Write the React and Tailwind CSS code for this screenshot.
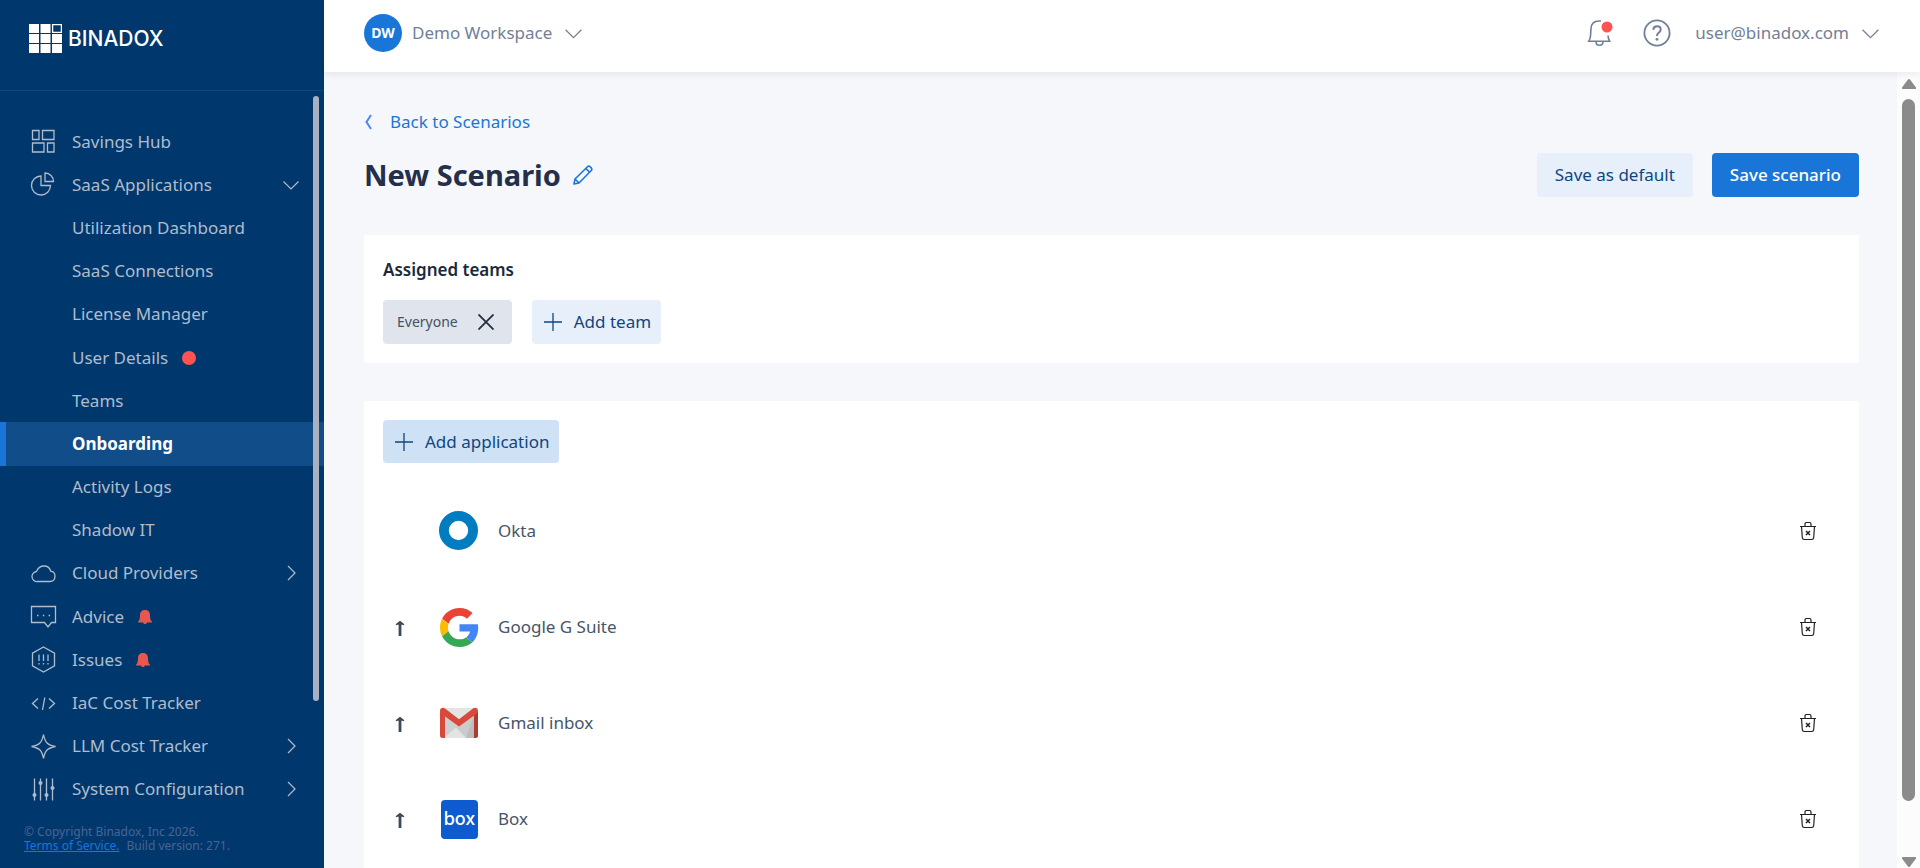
import React from "react";

const NAV = [
  { label: "Savings Hub", icon: "hub" },
  { label: "SaaS Applications", icon: "pie", chevron: "down" },
  { label: "Utilization Dashboard" },
  { label: "SaaS Connections" },
  { label: "License Manager" },
  { label: "User Details", badge: "dot" },
  { label: "Teams" },
  { label: "Onboarding", active: true },
  { label: "Activity Logs" },
  { label: "Shadow IT" },
  { label: "Cloud Providers", icon: "cloud", chevron: "right" },
  { label: "Advice", icon: "chat", badge: "bell" },
  { label: "Issues", icon: "issues", badge: "bell" },
  { label: "IaC Cost Tracker", icon: "code" },
  { label: "LLM Cost Tracker", icon: "star", chevron: "right" },
  { label: "System Configuration", icon: "sliders", chevron: "right" },
];

const NAV_SHAPES = {
  hub: (
    <path d="M2.500 2.500h6.500v9H2.500zM12.500 2.500h11.500v9H12.500zM2.500 15h11.500v9H2.500zM17.500 15h6.500v9h-6.500z" />
  ),
  pie: (
    <>
      <path d="M11 5a9.500 9.500 0 1 0 9.500 9.500H11z" />
      <path d="M15 2v8.500h8.500A8.500 8.500 0 0 0 15 2z" />
    </>
  ),
  cloud: (
    <path d="M7.500 21.500a5 5 0 0 1-1-10c1.500-3.500 4-5.500 7.500-5.500 3.500 0 6 2.200 6.700 5.200 2.700.3 4.300 2.500 4.300 5 0 3-2 5.300-5 5.300z" />
  ),
  chat: (
    <>
      <path d="M1.500 3.500h24v16h-4l-3.500 4.500-3.500-4.500h-13z" />
      <path d="M7 12.500h1.500M12.800 12.500h1.500M18.600 12.500h1.500" strokeWidth="1.600" />
    </>
  ),
  issues: (
    <>
      <path d="M13.500 1 24.500 7.200v12.600L13.500 26 2.500 19.800V7.200z" />
      <path d="M9 8.500v6.500M13.500 8.500v6.500M18 8.500v6.500M9 17v1.500M13.500 17v1.500M18 17v1.500" strokeWidth="1.300" />
    </>
  ),
  code: <path d="M8 8.500 2.500 13.500 8 18.500M19 8.500l5.500 5-5.500 5M14.800 7.500l-2.300 12.500" />,
  star: (
    <path d="M13.500 1.500c1.500 8 4 10.500 12 12-8 1.500-10.500 4-12 12-1.500-8-4-10.500-12-12 8-1.500 10.500-4 12-12z" />
  ),
  sliders: (
    <>
      <path d="M4.500 2.500v22M10.500 2.500v22M16.500 2.500v22M22.500 2.500v22" />
      <g fill="currentColor" stroke="none">
        <circle cx="4.500" cy="19" r="2" />
        <circle cx="10.500" cy="7" r="2" />
        <circle cx="16.500" cy="19" r="2" />
        <circle cx="22.500" cy="12" r="2" />
      </g>
    </>
  ),
};

function NavIcon({ name }) {
  return (
    <svg className="size-[27px]" viewBox="0 0 27 27" fill="none" stroke="currentColor" strokeWidth="1.300" aria-hidden="true">
      {NAV_SHAPES[name]}
    </svg>
  );
}

function Chevron({ className, dir = "down" }) {
  return (
    <svg className={className} viewBox="0 0 18 18" fill="none" stroke="currentColor" strokeWidth="1.200" aria-hidden="true">
      <path d={dir === "down" ? "M1.500 5.500 9 13l7.500-7.500" : "M6 2l7 7-7 7"} />
    </svg>
  );
}

function Badge({ type }) {
  if (type === "dot") return <span className="size-3.5 rounded-full bg-[#ff5252]" />;
  return (
    <svg className="h-4 w-3.5" viewBox="0 0 14 16" fill="#e6584f" aria-hidden="true">
      <path d="M7 1C4 1 2 3 2 6c0 3-.3 5-1.600 6.300-.6.600-.4 1.200.4 1.200h4.400c.2 1 .9 1.500 1.800 1.500s1.600-.5 1.800-1.500h4.400c.8 0 1-.6.400-1.200C12.300 11 12 9 12 6c0-3-2-5-5-5z" />
    </svg>
  );
}

function NavItem({ item }) {
  return (
    <li className="flex">
      <a
        href="#"
        aria-current={item.active ? "page" : undefined}
        className={
          item.active
            ? "flex flex-1 items-center border-l-6 border-[#1976d8] bg-[#104d89] pr-6 font-bold text-white"
            : "flex flex-1 items-center border-l-6 border-transparent pr-6 text-[#b0bccc]"
        }
      >
        <span className="flex w-[66px] pl-6">{item.icon && <NavIcon name={item.icon} />}</span>
        <span className="mr-3.5">{item.label}</span>
        {item.badge && <Badge type={item.badge} />}
        {item.chevron && <Chevron dir={item.chevron} className="ml-auto size-[18px]" />}
      </a>
    </li>
  );
}

function Sidebar() {
  return (
    <aside className="relative flex w-[324px] shrink-0 flex-col bg-[#00386e]">
      <div className="flex h-[91px] items-start gap-1.5 border-b border-[#0e4682] pt-6 pl-[29px]">
        <svg className="h-[29px] w-[33px]" viewBox="0 0 33 29" fill="#fff" aria-hidden="true">
          <path d="M0 0h10v9H0zM11.500 0h10v9h-10zM0 10h10v9H0zM11.500 10h10v9h-10zM23 10h10v9H23zM0 20h10v9H0zM11.500 20h10v9h-10zM23 20h10v9H23z" />
          <path d="M23.600.6h8.800v7.800h-8.800z" fill="none" stroke="#fff" strokeWidth="1.300" />
        </svg>
        <span className="font-[Inter,sans-serif] text-[21px] leading-[30px] font-medium text-white">BINADOX</span>
      </div>
      <nav className="flex min-h-0 flex-1 flex-col pt-[29px]" aria-label="Main">
        <ul className="grid flex-1 auto-rows-fr">
          {NAV.map((item) => (
            <NavItem key={item.label} item={item} />
          ))}
        </ul>
      </nav>
      <footer className="h-[57px] pt-3.5 pl-6 text-xs leading-[14px] text-[#496492]">
        <p>© Copyright Binadox, Inc 2026.</p>
        <p>
          <a href="#" className="mr-1 text-[#1976d8] underline">Terms of Service.</a> Build version: 271.
        </p>
      </footer>
      <div className="absolute top-24 right-[5px] h-[605px] w-1.5 rounded-full bg-[#a9b0c0]" />
    </aside>
  );
}

function Header() {
  return (
    <header className="relative z-10 flex h-[72px] shrink-0 items-start bg-white pt-3.5 pr-10 pl-10 text-[#718096] shadow-[0_2px_8px_rgba(0,0,0,0.08)]">
      <button type="button" className="flex h-[38px] items-center">
        <span className="mr-2.5 flex size-[38px] items-center justify-center rounded-full bg-[#1976d8] text-sm font-bold text-white">DW</span>
        Demo Workspace
        <Chevron className="ml-3 size-[19px]" />
      </button>
      <div className="ml-auto flex h-[38px] items-center">
        <button type="button" aria-label="Notifications" className="mr-[30px]">
          <svg className="h-7 w-[26px]" viewBox="0 0 26 28" fill="none" stroke="currentColor" strokeWidth="1.600" aria-hidden="true">
            <path d="M14 2h-2C7 2 4.300 5 4 9.500L3.500 17c-.2 2-1 4-1.700 5.200h20.800c-.7-1.200-1.400-2.700-1.600-5.700" />
            <path d="M9 22.500c0 5 7 5 7 0" />
            <circle cx="20" cy="8" r="5.500" fill="#ff5252" stroke="none" />
          </svg>
        </button>
        <button type="button" aria-label="Help" className="mr-6">
          <svg className="size-7" viewBox="0 0 28 28" fill="none" stroke="currentColor" strokeWidth="1.800" aria-hidden="true">
            <circle cx="14" cy="14" r="12.600" />
            <path d="M10.300 10.800c.2-2.300 1.600-3.500 3.700-3.500s3.700 1.300 3.700 3.200c0 1.500-.8 2.300-2 3.200-1.200.9-1.700 1.500-1.700 3.300" strokeWidth="2" />
            <circle cx="14" cy="20.300" r="1.400" fill="currentColor" stroke="none" />
          </svg>
        </button>
        <button type="button" className="flex items-center">
          user@binadox.com
          <Chevron className="ml-3 size-[19px]" />
        </button>
      </div>
    </header>
  );
}

function Plus() {
  return (
    <svg className="size-[18px]" viewBox="0 0 18 18" fill="none" stroke="currentColor" strokeWidth="1.300" aria-hidden="true">
      <path d="M9 0v18M0 9h18" />
    </svg>
  );
}

function OktaLogo() {
  return (
    <svg className="size-10" viewBox="0 0 40 40" aria-hidden="true">
      <circle cx="19.500" cy="19.500" r="14.600" fill="none" stroke="#007dc1" strokeWidth="9.800" />
    </svg>
  );
}

function GoogleLogo() {
  return (
    <svg className="ml-px size-[39px]" viewBox="0 0 48 48" aria-hidden="true">
      <path fill="#EA4335" d="M24 9.500c3.540 0 6.710 1.220 9.210 3.600l6.850-6.850C35.900 2.380 30.470 0 24 0 14.620 0 6.510 5.380 2.560 13.220l7.980 6.190C12.430 13.720 17.740 9.500 24 9.500z" />
      <path fill="#4285F4" d="M46.980 24.550c0-1.570-.15-3.090-.38-4.550H24v9.020h12.940c-.58 2.960-2.260 5.480-4.780 7.180l7.730 6c4.510-4.180 7.090-10.360 7.090-17.650z" />
      <path fill="#FBBC05" d="M10.530 28.590c-.48-1.450-.76-2.990-.76-4.590s.27-3.140.76-4.590l-7.980-6.190C.92 16.460 0 20.120 0 24c0 3.880.92 7.540 2.560 10.780l7.970-6.190z" />
      <path fill="#34A853" d="M24 48c6.480 0 11.930-2.130 15.890-5.810l-7.730-6c-2.150 1.450-4.920 2.300-8.160 2.300-6.260 0-11.570-4.220-13.470-9.910l-7.980 6.190C6.510 42.620 14.620 48 24 48z" />
    </svg>
  );
}

function GmailLogo() {
  return (
    <svg className="size-10" viewBox="0 0 40 40" aria-hidden="true">
      <path fill="#e3e5e4" d="M3 5h34v30H3z" />
      <path fill="#cfcfcf" d="M5 12l15 11-15 12z" />
      <path fill="#bdbdbd" d="M35 12v23h-8L17 25z" />
      <path fill="#d3d3d3" d="M17 25l3-2 15-11-8 23z" opacity=".6" />
      <path fill="#e3e5e4" d="M5 35l12-10.500L27 35z" />
      <path fill="#d8493c" d="M1 8v24.500A2.500 2.500 0 0 0 3.500 35H6V13z" />
      <path fill="#b03a30" d="M39 8v24.500a2.500 2.500 0 0 1-2.500 2.500H35V12z" />
      <path fill="#d8493c" d="M1 8c0-3 3-4 5-2.500l14 10.700 14-10.700C36 4 39 5 39 8c0 1.400-.7 2.300-1.700 3L20 23.500 2.700 11C1.700 10.300 1 9.400 1 8z" />
    </svg>
  );
}

function BoxLogo() {
  return (
    <span className="ml-0.5 flex h-[39px] w-[37px] items-center justify-center rounded bg-[#0d5bcf] font-[Inter,sans-serif] text-lg leading-none font-medium text-white" aria-hidden="true">
      box
    </span>
  );
}

function Arrow() {
  return (
    <svg className="h-4 w-2.5" viewBox="0 0 10 16" fill="none" stroke="#3c4a59" aria-hidden="true">
      <path d="M5 3v13" strokeWidth="2.800" />
      <path d="M1 4.800 5 1.500l4 3.300" strokeWidth="1.300" fill="#3c4a59" />
    </svg>
  );
}

function Trash() {
  return (
    <svg className="h-5 w-4" viewBox="0 0 16 20" fill="none" stroke="#222" strokeWidth="1.200" aria-hidden="true">
      <path d="M0 5.500h16M5 5V3.200C5 2.100 5.400 1.500 6.200 1.500h3.600c.8 0 1.200.6 1.200 1.700V5" />
      <path d="M1.500 5.500l.8 11c.1 1.300.8 2 2 2h7.400c1.200 0 1.900-.7 2-2l.8-11" />
      <path d="M6 10l4 4M10 10l-4 4" strokeWidth="1.500" />
    </svg>
  );
}

const APPS = [
  { name: "Okta", Logo: OktaLogo },
  { name: "Google G Suite", Logo: GoogleLogo },
  { name: "Gmail inbox", Logo: GmailLogo },
  { name: "Box", Logo: BoxLogo },
];

function Scrollbar() {
  return (
    <div className="flex w-[23px] shrink-0 flex-col items-center bg-[#fcfcfc] pt-1.5" aria-hidden="true">
      <svg className="h-3 w-3.5" viewBox="0 0 14 12" fill="#8b8b8b"><path d="M6 1.500q1-1 2 0L14 9.500q.3 1.500-1 1.500H1q-1.300 0-1-1.500z" /></svg>
      <div className="mt-[9px] w-[13px] flex-1 rounded-full bg-[#8b8b8b]" />
      <svg className="mt-[55px] h-3 w-3.5" viewBox="0 0 14 12" fill="#8b8b8b"><path d="M6 10.500q1 1 2 0L14 2.500Q14.300 1 13 1H1Q-.3 1 0 2.500z" /></svg>
    </div>
  );
}

export default function App() {
  return (
    <div className="flex h-screen overflow-hidden bg-[#f5f7fb] font-['Noto_Sans',sans-serif] text-[17px] leading-6">
      <Sidebar />
      <div className="flex min-w-0 flex-1 flex-col">
        <Header />
        <div className="flex min-h-0 flex-1">
          <main className="min-w-0 flex-1 overflow-hidden pt-[38px] pr-[38px] pl-10">
            <a href="#" className="flex h-6 w-fit items-center text-[#1976d8]">
              <svg className="mr-[17px] h-4 w-[9px]" viewBox="0 0 9 16" fill="none" stroke="#4a86f7" strokeWidth="2" aria-hidden="true">
                <path d="M7 1 2.500 8 7 15" />
              </svg>
              Back to Scenarios
            </a>
            <div className="mt-[19px] flex h-11 items-center">
              <h1 className="text-[29px] font-bold text-[#232f4b]">New Scenario</h1>
              <button type="button" aria-label="Rename scenario" className="ml-3">
                <svg className="size-5" viewBox="0 0 20 20" fill="none" stroke="#1976d8" strokeWidth="1.600" strokeLinejoin="round" aria-hidden="true">
                  <path d="M1 19l1-5L14.500 1.700q1.300-1.100 2.600 0l1.200 1.200q1.100 1.300 0 2.600L6 18z" />
                  <path d="M12.800 3.400l3.800 3.800M2 14l4 4" />
                </svg>
              </button>
              <button type="button" className="ml-auto h-11 rounded bg-[#e6effa] px-[18px] text-[#0f4680]">Save as default</button>
              <button type="button" className="ml-[19px] h-11 rounded bg-[#1976d8] px-[18px] font-medium text-white">Save scenario</button>
            </div>
            <section className="mt-[38px] bg-white p-[19px]">
              <h2 className="pt-1 font-semibold text-[#192a3a]">Assigned teams</h2>
              <div className="mt-[18px] flex gap-5">
                <div className="flex h-11 items-center gap-5 rounded bg-[#e0e4ed] pr-[18px] pl-3.5 text-sm text-[#475161]">
                  Everyone
                  <button type="button" aria-label="Remove Everyone">
                    <svg className="size-4" viewBox="0 0 16 16" fill="none" stroke="#22303d" strokeWidth="1.800" aria-hidden="true"><path d="M.5.500l15 15M15.500.500l-15 15" /></svg>
                  </button>
                </div>
                <button type="button" className="flex h-11 items-center gap-3 rounded bg-[#e6effa] pr-2.5 pl-3 text-[#0f4680]"><Plus />Add team</button>
              </div>
            </section>
            <section className="mt-[38px] bg-white p-[19px]">
              <button type="button" className="flex h-[43px] items-center gap-3 rounded bg-[#cfe1f5] pr-2.5 pl-3 text-[#0f4680]"><Plus />Add application</button>
              <ul className="mt-5">
                {APPS.map(({ name, Logo }, i) => (
                  <li key={name} className="flex h-24 items-center">
                    <span className="flex w-14 pt-0.5 pl-3">
                      {i > 0 && <button type="button" aria-label={"Move " + name + " up"}><Arrow /></button>}
                    </span>
                    <span className="flex w-[59px]"><Logo /></span>
                    <span className="text-[#475568]">{name}</span>
                    <button type="button" aria-label={"Delete " + name} className="mr-6 ml-auto"><Trash /></button>
                  </li>
                ))}
              </ul>
            </section>
          </main>
          <Scrollbar />
        </div>
      </div>
    </div>
  );
}
